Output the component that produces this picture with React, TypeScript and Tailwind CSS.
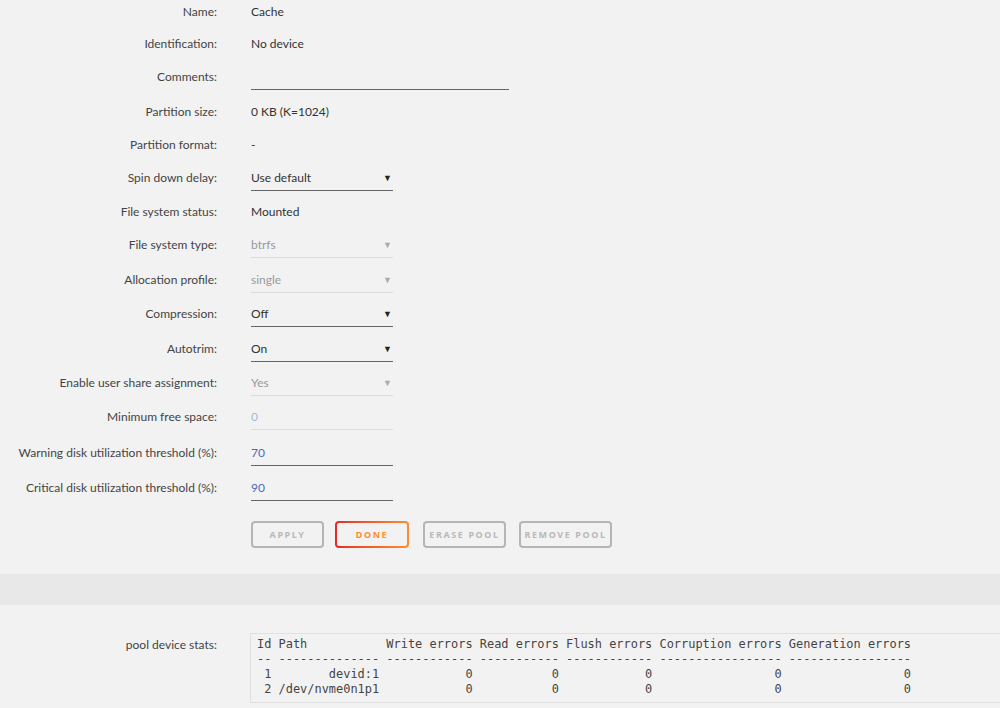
import React from "react";

type Row = {
  label: string;
  h: number;
  kind: "text" | "input" | "select";
  value?: string;
  width?: number;
  disabled?: boolean;
  tone?: "normal" | "blue" | "lightblue";
};

const rows: Row[] = [
  { label: "Name:", h: 32, kind: "text", value: "Cache" },
  { label: "Identification:", h: 33, kind: "text", value: "No device" },
  { label: "Comments:", h: 35, kind: "input", value: "", width: 258 },
  { label: "Partition size:", h: 33, kind: "text", value: "0 KB (K=1024)" },
  { label: "Partition format:", h: 33, kind: "text", value: "-" },
  { label: "Spin down delay:", h: 34, kind: "select", value: "Use default" },
  { label: "File system status:", h: 33, kind: "text", value: "Mounted" },
  { label: "File system type:", h: 35, kind: "select", value: "btrfs", disabled: true },
  { label: "Allocation profile:", h: 34, kind: "select", value: "single", disabled: true },
  { label: "Compression:", h: 35, kind: "select", value: "Off" },
  { label: "Autotrim:", h: 34, kind: "select", value: "On" },
  { label: "Enable user share assignment:", h: 34, kind: "select", value: "Yes", disabled: true },
  { label: "Minimum free space:", h: 36, kind: "input", value: "0", width: 142, disabled: true, tone: "lightblue" },
  { label: "Warning disk utilization threshold (%):", h: 35, kind: "input", value: "70", width: 142, tone: "blue" },
  { label: "Critical disk utilization threshold (%):", h: 35, kind: "input", value: "90", width: 142, tone: "blue" },
];

const stats = [
  "Id Path           Write errors Read errors Flush errors Corruption errors Generation errors",
  "-- -------------- ------------ ----------- ------------ ----------------- -----------------",
  " 1        devid:1            0           0            0                 0                 0",
  " 2 /dev/nvme0n1p1            0           0            0                 0                 0",
];

function Value({ r }: { r: Row }) {
  if (r.kind === "text") {
    return <span className="text-[#333]">{r.value}</span>;
  }
  if (r.kind === "input") {
    const color =
      r.tone === "blue" ? "text-[#486dba]" : r.tone === "lightblue" ? "text-[#a6b6da]" : "text-[#333]";
    const border = r.disabled ? "border-[#dcdcdc]" : "border-[#666]";
    return (
      <div className={`h-[22px] border-b ${border} ${color}`} style={{ width: r.width }}>
        {r.value}
      </div>
    );
  }
  const text = r.disabled ? "text-[#9a9a9a]" : "text-[#333]";
  const border = r.disabled ? "border-[#dcdcdc]" : "border-[#666]";
  const arrow = r.disabled ? "text-[#aaa]" : "text-[#222]";
  return (
    <div className={`flex h-[22px] w-[142px] items-start justify-between border-b ${border} ${text}`}>
      <span>{r.value}</span>
      <span className={`mr-[1px] text-[9px] leading-[18px] ${arrow}`}>▼</span>
    </div>
  );
}

function Btn({ children, w }: { children: React.ReactNode; w: string }) {
  return (
    <div
      className={`flex h-[27px] items-center justify-center whitespace-nowrap rounded-[4px] border-2 border-[#b5b5b5] text-[9px] font-bold tracking-[1.6px] text-[#b9b9b9] ${w}`}
      style={{ fontFamily: '"Noto Sans", sans-serif' }}
    >
      {children}
    </div>
  );
}

export default function App() {
  return (
    <div
      className="h-[708px] w-[1000px] overflow-hidden bg-[#f2f2f2] text-[12px] leading-[18px] text-[#444]"
      style={{ fontFamily: 'Lato, "Noto Sans", sans-serif' }}
    >
      <div className="pt-[3px]">
        {rows.map((r) => (
          <div key={r.label} className="flex items-start gap-[34px]" style={{ height: r.h }}>
            <div className="w-[217px] shrink-0 text-right">{r.label}</div>
            <Value r={r} />
          </div>
        ))}
      </div>
      <div className="mt-[7px] flex pl-[251px]">
        <Btn w="w-[73px]">APPLY</Btn>
        <div
          className="ml-[11px] h-[27px] w-[74px] rounded-[4px] bg-gradient-to-r from-[#e22828] to-[#ff8c2f] p-[2px]"
          style={{ fontFamily: '"Noto Sans", sans-serif' }}
        >
          <div className="flex h-full items-center justify-center rounded-[2px] bg-[#f2f2f2] text-[9px] font-bold tracking-[1.6px] text-[#ff8c2f]">
            DONE
          </div>
        </div>
        <div className="ml-[14px]">
          <Btn w="w-[83px]">ERASE POOL</Btn>
        </div>
        <div className="ml-[13px]">
          <Btn w="w-[93px]">REMOVE POOL</Btn>
        </div>
      </div>
      <div className="mt-[26px] h-[31px] border-t border-[#e6e6e6] bg-[#e8e8e8]" />
      <div className="mt-[28px] flex items-start gap-[33px]">
        <div className="w-[217px] shrink-0 pt-[3px] text-right">pool device stats:</div>
        <pre
          className="w-[800px] shrink-0 border border-[#e0e0e0] pb-[5px] pl-[6px] pt-[3px] text-[11.95px] leading-[15px] text-[#444]"
          style={{ fontFamily: '"DejaVu Sans Mono", monospace' }}
        >
          {stats.join("\n")}
        </pre>
      </div>
    </div>
  );
}
